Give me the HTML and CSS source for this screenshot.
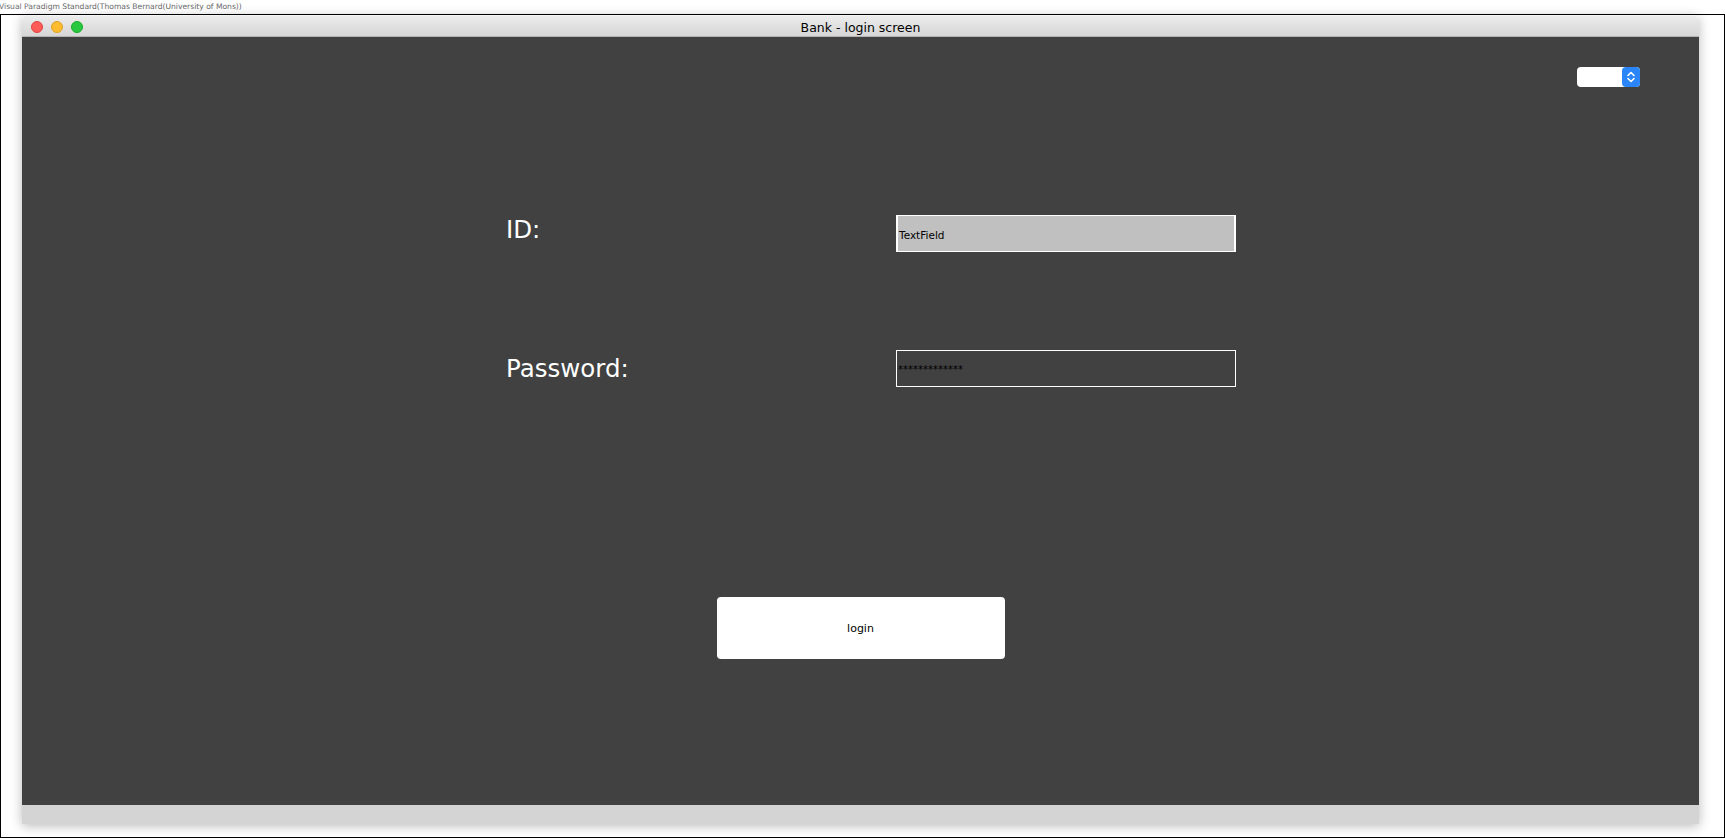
FILE: index.html
```html
<!DOCTYPE html>
<html lang="en">
<head>
<meta charset="utf-8">
<title>Bank - login screen</title>
<link rel="stylesheet" href="styles.css">
</head>
<body>
<div class="page">
  <div class="vp-caption">Visual Paradigm Standard(Thomas Bernard(University of Mons))</div>
  <div class="frame">
    <div class="window">
      <div class="titlebar">
        <div class="lights">
          <span class="light red"></span>
          <span class="light yellow"></span>
          <span class="light green"></span>
        </div>
        <div class="title">Bank - login screen</div>
        <div class="spacer"></div>
      </div>
      <div class="content">
        <div class="top-row">
          <div class="select">
            <span class="select-btn">
              <svg width="18" height="20" viewBox="0 0 18 20" aria-hidden="true">
                <path d="M6 8.5 L9 5.5 L12 8.5" fill="none" stroke="#ffffff" stroke-width="1.6" stroke-linecap="round" stroke-linejoin="round"/>
                <path d="M6 11.5 L9 14.5 L12 11.5" fill="none" stroke="#ffffff" stroke-width="1.6" stroke-linecap="round" stroke-linejoin="round"/>
              </svg>
            </span>
          </div>
        </div>
        <div class="form">
          <div class="row">
            <div class="label label-id">ID:</div>
            <div class="field textfield">TextField</div>
          </div>
          <div class="row">
            <div class="label label-password">Password:</div>
            <div class="field password">*************</div>
          </div>
        </div>
        <div class="actions">
          <div class="login">login</div>
        </div>
      </div>
      <div class="statusbar"></div>
    </div>
  </div>
</div>
</body>
</html>
```

FILE: styles.css
```css
html, body {
  margin: 0;
  padding: 0;
  background: #ffffff;
}

body {
  width: 1725px;
  height: 838px;
  overflow: hidden;
  font-family: "DejaVu Sans", "Liberation Sans", sans-serif;
}

.page {
  display: flex;
  flex-direction: column;
  width: 1725px;
  height: 838px;
}

.vp-caption {
  height: 14px;
  line-height: 13px;
  font-size: 7.6px;
  color: #6a6a6a;
  margin-left: -1px;
  white-space: nowrap;
}

.frame {
  box-sizing: border-box;
  width: 1725px;
  height: 824px;
  border: 1px solid #000000;
  padding-left: 21px;
}

.window {
  display: flex;
  flex-direction: column;
  width: 1677px;
  height: 809px;
  border-radius: 5px 5px 0 0;
  box-shadow: 0 2px 12px rgba(0, 0, 0, 0.28);
}

.titlebar {
  box-sizing: border-box;
  height: 22px;
  display: grid;
  grid-template-columns: 1fr auto 1fr;
  align-items: center;
  background: linear-gradient(#ececec, #d6d6d6);
  border-top: 1px solid #f5f5f5;
  border-bottom: 1px solid #b4b4b4;
  border-radius: 5px 5px 0 0;
}

.lights {
  display: flex;
  gap: 8px;
  padding-left: 9px;
}

.light {
  width: 12px;
  height: 12px;
  border-radius: 50%;
  box-sizing: border-box;
}

.light.red { background: #fc5b57; border: 1px solid #e0443e; }
.light.yellow { background: #fdbc2e; border: 1px solid #dea123; }
.light.green { background: #28c840; border: 1px solid #1aab29; }

.title {
  font-size: 12.5px;
  color: #000000;
  line-height: 20px;
  padding-top: 2px;
}

.content {
  height: 768px;
  background: #414141;
  display: flex;
  flex-direction: column;
}

.top-row {
  display: flex;
  justify-content: flex-end;
  padding-top: 30px;
  padding-right: 59px;
}

.select {
  width: 63px;
  height: 20px;
  background: #ffffff;
  border-radius: 4px;
  display: flex;
  justify-content: flex-end;
}

.select-btn {
  display: block;
  width: 18px;
  height: 20px;
  background: #2a86f8;
  border-radius: 4px;
}

.select-btn svg {
  display: block;
}

.form {
  margin-top: 128px;
  padding-left: 484px;
  display: flex;
  flex-direction: column;
  gap: 98px;
}

.row {
  display: flex;
  align-items: flex-start;
}

.label {
  width: 390px;
  font-size: 24.5px;
  line-height: 31px;
  color: #ffffff;
}

.label-id {
  margin-top: -1px;
}

.label-password {
  margin-top: 3px;
}

.field {
  box-sizing: border-box;
  width: 340px;
  height: 37px;
  border: 1px solid #ffffff;
  padding-left: 1px;
  display: flex;
  align-items: center;
  color: #000000;
}

.textfield {
  background: #c0c0c0;
  border-left-width: 2px;
  border-right-width: 2px;
  font-size: 10.5px;
  padding-top: 2px;
}

.password {
  background: #414141;
  font-size: 10px;
  color: #000000;
  padding-top: 1px;
}

.actions {
  margin-top: 210px;
  display: flex;
  justify-content: center;
}

.login {
  width: 288px;
  height: 62px;
  background: #ffffff;
  border-radius: 4px;
  display: flex;
  align-items: center;
  justify-content: center;
  font-size: 11px;
  color: #000000;
}

.statusbar {
  height: 19px;
  background: #d4d4d4;
}
```
